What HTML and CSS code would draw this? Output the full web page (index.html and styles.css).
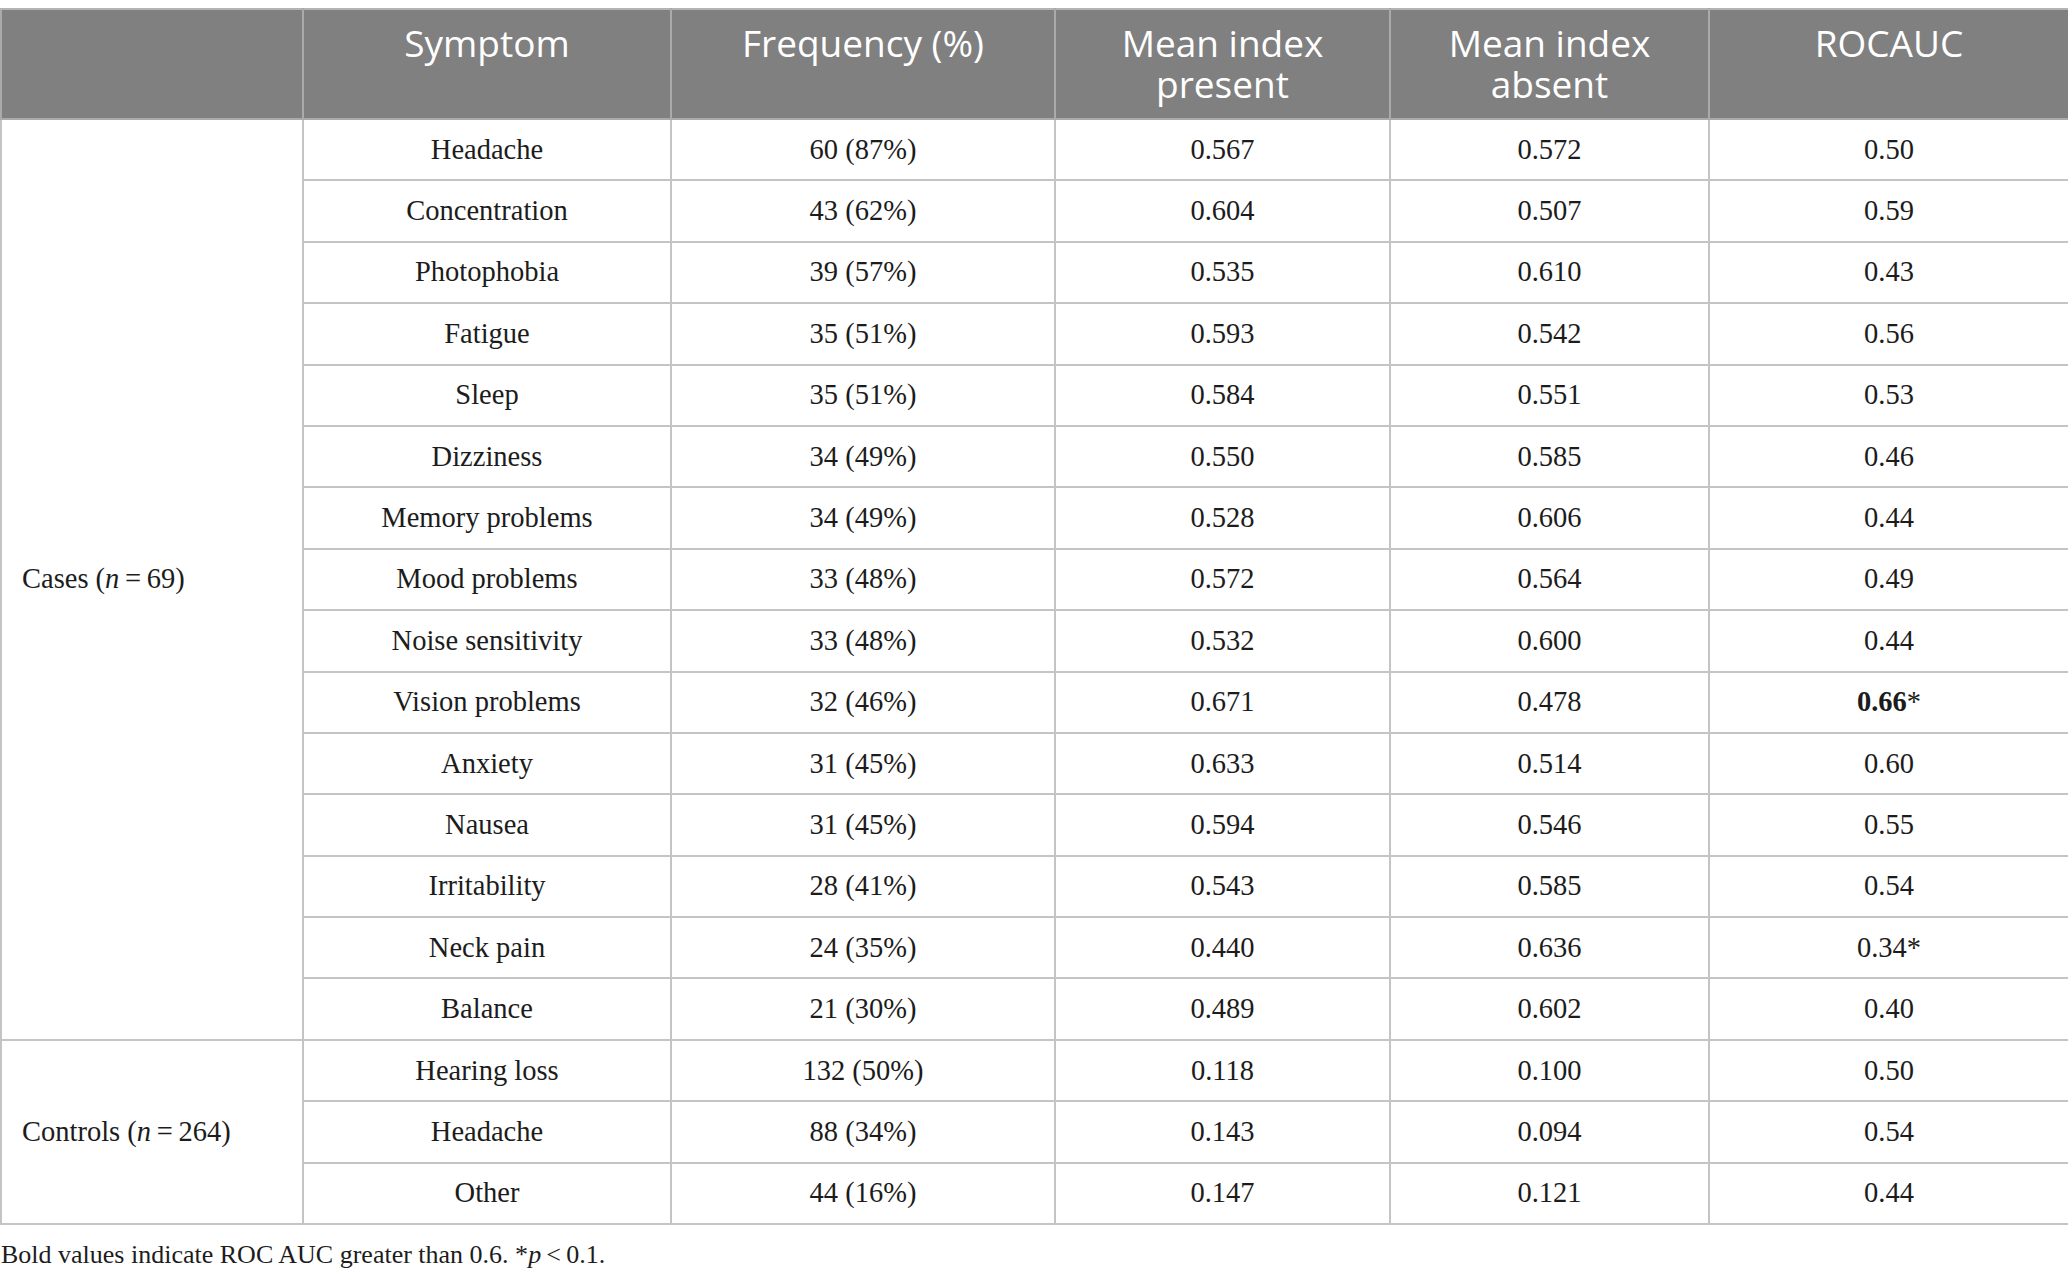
FILE: index.html
```html
<!DOCTYPE html>
<html lang="en">
<head>
<meta charset="utf-8">
<title>Symptom table</title>
<link rel="stylesheet" href="styles.css">
</head>
<body>
<div class="page">
<table class="data">
  <colgroup>
    <col class="c1"><col class="c2"><col class="c3"><col class="c4"><col class="c5"><col class="c6">
  </colgroup>
  <thead>
    <tr>
      <th></th>
      <th>Symptom</th>
      <th>Frequency (%)</th>
      <th>Mean index present</th>
      <th>Mean index absent</th>
      <th>ROCAUC</th>
    </tr>
  </thead>
  <tbody>
    <tr><td class="group" rowspan="15">Cases (<i>n</i>&#8201;=&#8201;69)</td><td>Headache</td><td>60 (87%)</td><td>0.567</td><td>0.572</td><td>0.50</td></tr>
    <tr><td>Concentration</td><td>43 (62%)</td><td>0.604</td><td>0.507</td><td>0.59</td></tr>
    <tr><td>Photophobia</td><td>39 (57%)</td><td>0.535</td><td>0.610</td><td>0.43</td></tr>
    <tr><td>Fatigue</td><td>35 (51%)</td><td>0.593</td><td>0.542</td><td>0.56</td></tr>
    <tr><td>Sleep</td><td>35 (51%)</td><td>0.584</td><td>0.551</td><td>0.53</td></tr>
    <tr><td>Dizziness</td><td>34 (49%)</td><td>0.550</td><td>0.585</td><td>0.46</td></tr>
    <tr><td>Memory problems</td><td>34 (49%)</td><td>0.528</td><td>0.606</td><td>0.44</td></tr>
    <tr><td>Mood problems</td><td>33 (48%)</td><td>0.572</td><td>0.564</td><td>0.49</td></tr>
    <tr><td>Noise sensitivity</td><td>33 (48%)</td><td>0.532</td><td>0.600</td><td>0.44</td></tr>
    <tr><td>Vision problems</td><td>32 (46%)</td><td>0.671</td><td>0.478</td><td><b>0.66</b>*</td></tr>
    <tr><td>Anxiety</td><td>31 (45%)</td><td>0.633</td><td>0.514</td><td>0.60</td></tr>
    <tr><td>Nausea</td><td>31 (45%)</td><td>0.594</td><td>0.546</td><td>0.55</td></tr>
    <tr><td>Irritability</td><td>28 (41%)</td><td>0.543</td><td>0.585</td><td>0.54</td></tr>
    <tr><td>Neck pain</td><td>24 (35%)</td><td>0.440</td><td>0.636</td><td>0.34*</td></tr>
    <tr><td>Balance</td><td>21 (30%)</td><td>0.489</td><td>0.602</td><td>0.40</td></tr>
    <tr><td class="group" rowspan="3">Controls (<i>n</i>&#8201;=&#8201;264)</td><td>Hearing loss</td><td>132 (50%)</td><td>0.118</td><td>0.100</td><td>0.50</td></tr>
    <tr><td>Headache</td><td>88 (34%)</td><td>0.143</td><td>0.094</td><td>0.54</td></tr>
    <tr><td>Other</td><td>44 (16%)</td><td>0.147</td><td>0.121</td><td>0.44</td></tr>
  </tbody>
</table>
<p class="note">Bold values indicate ROC AUC greater than 0.6. *<i>p</i>&#8201;&lt;&#8201;0.1.</p>
</div>
</body>
</html>
```

FILE: styles.css
```css
html, body {
  margin: 0;
  padding: 0;
  background: #ffffff;
}

.page {
  padding-top: 8px;
  width: 2068px;
}

.data {
  width: 2068px;
  table-layout: fixed;
  border-collapse: collapse;
  border: 2px solid #b4b4b4;
  font-family: "Liberation Serif", "Times New Roman", serif;
  font-size: 28.5px;
  color: #1c1c1c;
}

.c1 { width: 302px; }
.c2 { width: 368px; }
.c3 { width: 384px; }
.c4 { width: 335px; }
.c5 { width: 319px; }
.c6 { width: 360px; }

.data th {
  background: #7f807f;
  color: #ffffff;
  font-family: "Open Sans", "Noto Sans", sans-serif;
  font-weight: 400;
  font-size: 37px;
  line-height: 41px;
  height: 110px;
  box-sizing: border-box;
  padding: 12px 40px 0;
  vertical-align: top;
  text-align: center;
  border: 2px solid #a9aaa9;
  border-top-color: #b4b4b4;
}

.data td {
  height: 61.4px;
  box-sizing: border-box;
  padding: 0 8px;
  text-align: center;
  vertical-align: middle;
  border: 2px solid #c4c4c4;
  line-height: 30px;
}

.data td.group {
  text-align: left;
  padding-left: 20px;
}

.data td b {
  font-weight: 700;
}

.note {
  margin: 15px 0 0 1px;
  font-family: "Liberation Serif", "Times New Roman", serif;
  font-size: 26px;
  color: #1c1c1c;
}
```
